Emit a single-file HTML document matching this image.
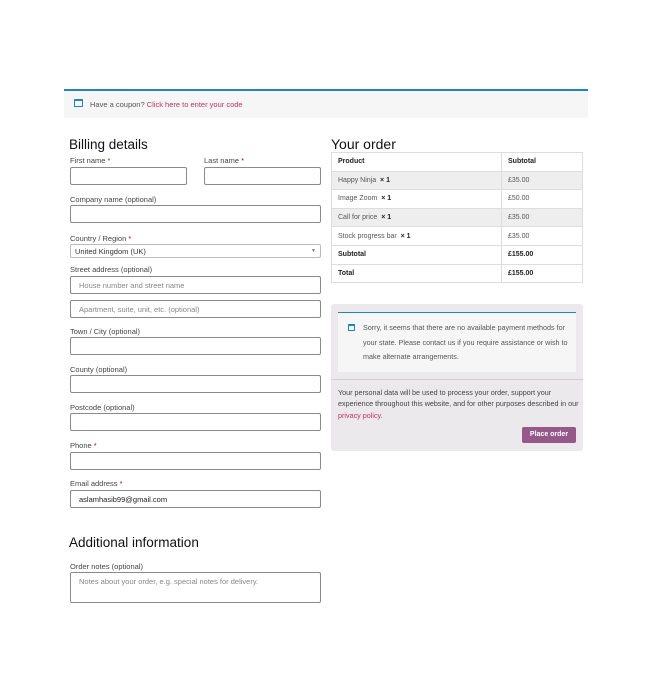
<!DOCTYPE html>
<html><head><meta charset="utf-8"><style>
*{margin:0;padding:0;box-sizing:border-box}
body{width:657px;height:696px;background:#fff;font-family:"Liberation Sans",sans-serif;color:#333;position:relative;overflow:hidden}
.a{position:absolute}
.lbl{position:absolute;font-size:7.5px;color:#444;left:70px}
.req{color:#c00}
.in{position:absolute;border:1px solid #8a8a8a;border-radius:2px;background:#fff;height:18px;font-size:7.5px;color:#888;padding:5px 8px;line-height:7px}
h2{position:absolute;font-weight:normal;font-size:13.5px;color:#111}
table{position:absolute;left:331px;top:152px;width:252px;border-collapse:collapse;font-size:7px}
td{border:1px solid #ddd;height:18.6px;padding:0 6px;color:#555}
tr.g td{background:#eee}
td b{color:#222}
.th td{color:#222;font-weight:bold}
</style></head><body>
<div class="a" style="left:64px;top:89px;width:524px;height:29px;background:#f6f6f6;border-top:2px solid #1e85be"></div>
<div class="a" style="left:74px;top:99px;width:9px;height:8px;border:1.3px solid #1e85be;border-top-width:2.5px"></div>
<div class="a" style="left:90px;top:100px;font-size:7.5px;color:#555">Have a coupon? <span style="color:#c4305f">Click here to enter your code</span></div>

<h2 style="left:69px;top:137px">Billing details</h2>
<div class="lbl" style="top:156px">First name <span class="req">*</span></div>
<div class="lbl" style="top:156px;left:204px">Last name <span class="req">*</span></div>
<div class="in" style="left:70px;top:167px;width:117px"></div>
<div class="in" style="left:204px;top:167px;width:117px"></div>
<div class="lbl" style="top:195px">Company name (optional)</div>
<div class="in" style="left:70px;top:205px;width:251px"></div>
<div class="lbl" style="top:234px">Country / Region <span class="req">*</span></div>
<div class="in" style="left:70px;top:244px;width:251px;height:14px;border-color:#bbb;padding:3px 4px;color:#333">United Kingdom (UK)<span style="position:absolute;right:4px;top:3px;font-size:5px;color:#777">▼</span></div>
<div class="lbl" style="top:265px">Street address (optional)</div>
<div class="in" style="left:70px;top:276px;width:251px">House number and street name</div>
<div class="in" style="left:70px;top:300px;width:251px">Apartment, suite, unit, etc. (optional)</div>
<div class="lbl" style="top:327px">Town / City (optional)</div>
<div class="in" style="left:70px;top:337px;width:251px"></div>
<div class="lbl" style="top:365px">County (optional)</div>
<div class="in" style="left:70px;top:375px;width:251px"></div>
<div class="lbl" style="top:403px">Postcode (optional)</div>
<div class="in" style="left:70px;top:413px;width:251px"></div>
<div class="lbl" style="top:441px">Phone <span class="req">*</span></div>
<div class="in" style="left:70px;top:452px;width:251px"></div>
<div class="lbl" style="top:479px">Email address <span class="req">*</span></div>
<div class="in" style="left:70px;top:490px;width:251px;color:#222">aslamhasib99@gmail.com</div>

<h2 style="left:69px;top:535px">Additional information</h2>
<div class="lbl" style="top:562px">Order notes (optional)</div>
<div class="in" style="left:70px;top:572px;width:251px;height:31px">Notes about your order, e.g. special notes for delivery.</div>

<h2 style="left:331px;top:136px;font-size:14px">Your order</h2>
<table>
<tr class="th"><td style="width:170px">Product</td><td>Subtotal</td></tr>
<tr class="g"><td>Happy Ninja &nbsp;<b>× 1</b></td><td>£35.00</td></tr>
<tr><td>Image Zoom &nbsp;<b>× 1</b></td><td>£50.00</td></tr>
<tr class="g"><td>Call for price &nbsp;<b>× 1</b></td><td>£35.00</td></tr>
<tr><td>Stock progress bar &nbsp;<b>× 1</b></td><td>£35.00</td></tr>
<tr class="th"><td>Subtotal</td><td>£155.00</td></tr>
<tr class="th"><td>Total</td><td>£155.00</td></tr>
</table>

<div class="a" style="left:331px;top:304px;width:252px;height:147px;background:#ebe9eb;border-radius:3px"></div>
<div class="a" style="left:338px;top:312px;width:238px;height:60px;background:#f7f6f7;border-top:1.5px solid #1e85be"></div>
<div class="a" style="left:348px;top:324px;width:7px;height:7px;border:1.2px solid #1e85be;border-top-width:2px"></div>
<div class="a" style="left:363px;top:321px;width:212px;font-size:7.2px;line-height:14.5px;color:#555">Sorry, it seems that there are no available payment methods for your state. Please contact us if you require assistance or wish to make alternate arrangements.</div>
<div class="a" style="left:331px;top:379px;width:252px;height:1px;background:#d3ced2"></div>
<div class="a" style="left:338px;top:387px;width:242px;font-size:7.2px;line-height:11.3px;color:#444">Your personal data will be used to process your order, support your experience throughout this website, and for other purposes described in our <span style="color:#c4305f">privacy policy</span>.</div>
<div class="a" style="left:522px;top:427px;width:54px;height:16px;background:#96588a;border-radius:2px;color:#fff;font-size:7px;font-weight:bold;text-align:center;line-height:16px">Place order</div>
</body></html>
